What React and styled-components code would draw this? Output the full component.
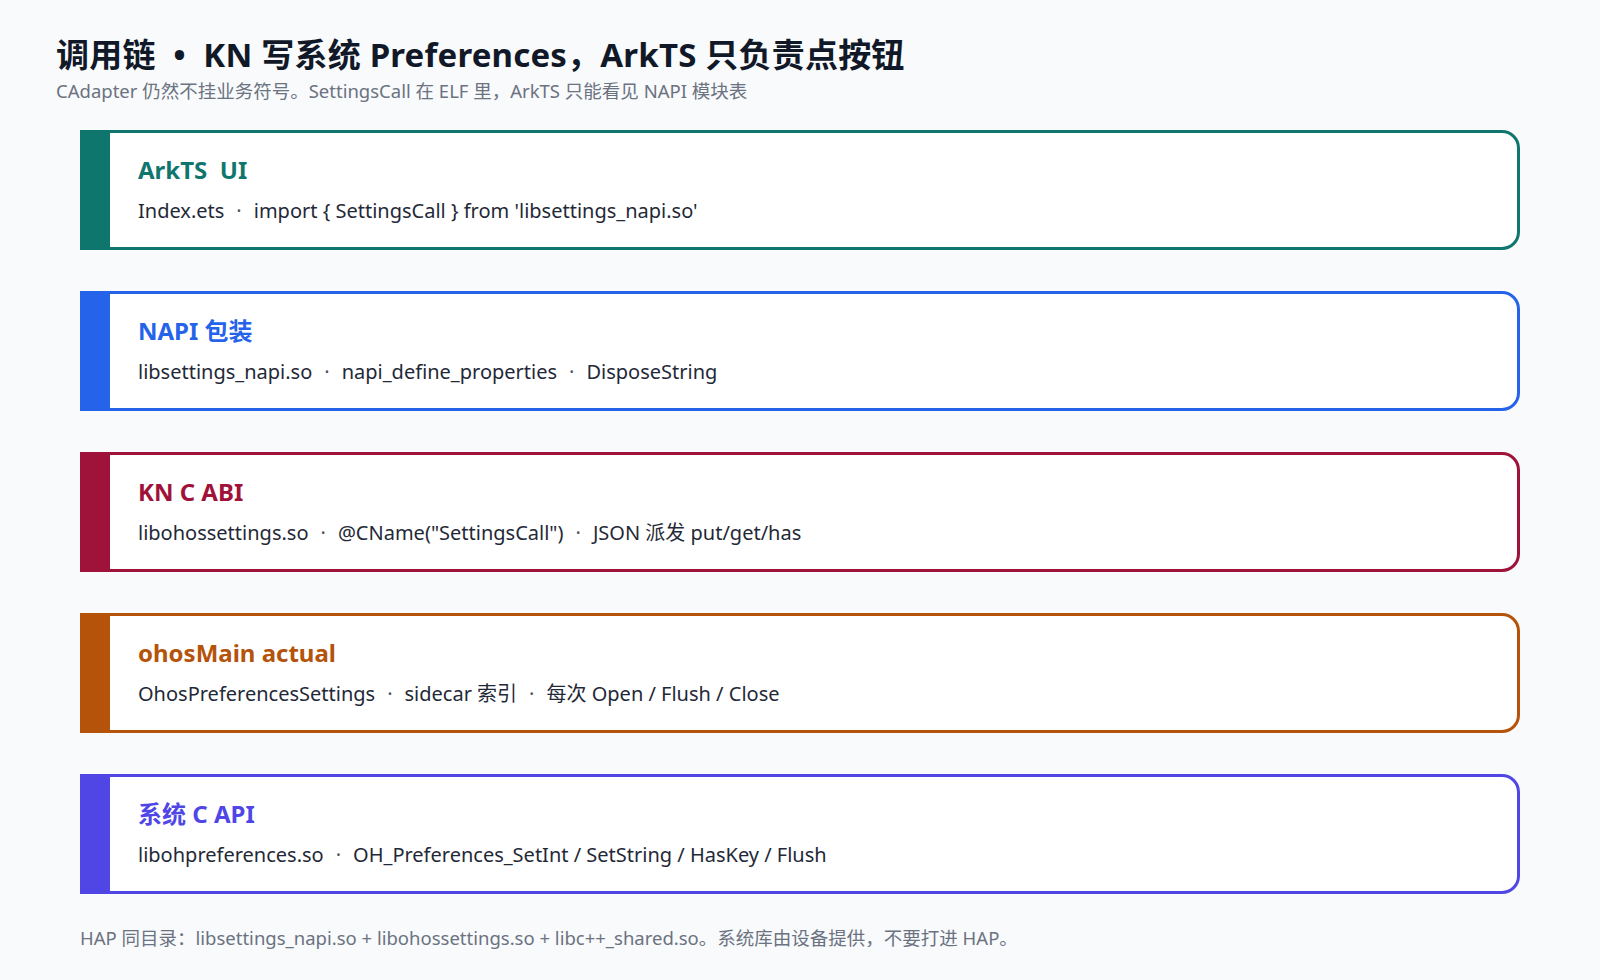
import styled, { createGlobalStyle } from 'styled-components';

const Global = createGlobalStyle`
  body {
    margin: 0;
    background: #f8fafc;
    font-family: "Noto Sans", "Noto Sans CJK SC", sans-serif;
  }
`;

const Page = styled.div`
  width: 1600px;
  height: 980px;
  box-sizing: border-box;
  padding: 32px 80px 0 56px;
`;

const Title = styled.h1`
  margin: 0;
  font-size: 33px;
  font-weight: 700;
  color: #111827;
  line-height: 46px;
  letter-spacing: 0.2px;
`;

const Subtitle = styled.p`
  margin: 0 0 26px;
  font-size: 18.5px;
  color: #6b7280;
  line-height: 26px;
`;

const Stack = styled.div`
  display: flex;
  flex-direction: column;
  gap: 41px;
  margin-left: 24px;
`;

const Card = styled.div`
  height: 120px;
  box-sizing: border-box;
  background: #fff;
  border: 3px solid ${p => p.$color};
  border-left: 30px solid ${p => p.$color};
  border-radius: 0 18px 18px 0;
  padding: 20px 28px;
`;

const CardTitle = styled.div`
  font-size: 24px;
  font-weight: 700;
  color: ${p => p.$color};
  line-height: 34px;
  white-space: pre;
`;

const CardBody = styled.div`
  margin-top: 10px;
  font-size: 20px;
  color: #1f2937;
  line-height: 28px;
`;

const Dot = styled.span`
  margin: 0 12px;
  color: #4b5563;
`;

const Footer = styled.p`
  margin: 30px 0 0 24px;
  font-size: 18.5px;
  color: #6b7280;
`;

const layers = [
  { color: '#0f766e', title: 'ArkTS  UI', parts: ['Index.ets', "import { SettingsCall } from 'libsettings_napi.so'"] },
  { color: '#2563eb', title: 'NAPI 包装', parts: ['libsettings_napi.so', 'napi_define_properties', 'DisposeString'] },
  { color: '#9f1239', title: 'KN C ABI', parts: ['libohossettings.so', '@CName("SettingsCall")', 'JSON 派发 put/get/has'] },
  { color: '#b45309', title: 'ohosMain actual', parts: ['OhosPreferencesSettings', 'sidecar 索引', '每次 Open / Flush / Close'] },
  { color: '#4f46e5', title: '系统 C API', parts: ['libohpreferences.so', 'OH_Preferences_SetInt / SetString / HasKey / Flush'] },
];

export default function App() {
  return (
    <Page>
      <Global />
      <Title>调用链 &nbsp;•&nbsp; KN 写系统 Preferences，ArkTS 只负责点按钮</Title>
      <Subtitle>CAdapter 仍然不挂业务符号。SettingsCall 在 ELF 里，ArkTS 只能看见 NAPI 模块表</Subtitle>
      <Stack>
        {layers.map(l => (
          <Card key={l.title} $color={l.color}>
            <CardTitle $color={l.color}>{l.title}</CardTitle>
            <CardBody>
              {l.parts.map((p, i) => (
                <span key={i}>{i > 0 && <Dot>·</Dot>}{p}</span>
              ))}
            </CardBody>
          </Card>
        ))}
      </Stack>
      <Footer>HAP 同目录：libsettings_napi.so + libohossettings.so + libc++_shared.so。系统库由设备提供，不要打进 HAP。</Footer>
    </Page>
  );
}
